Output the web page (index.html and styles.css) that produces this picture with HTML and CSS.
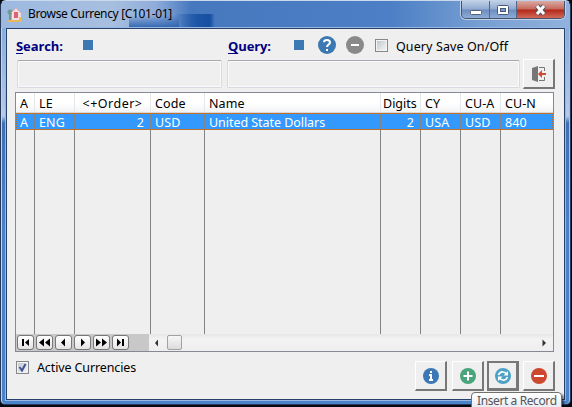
FILE: index.html
```html
<!DOCTYPE html>
<html lang="en">
<head>
<meta charset="utf-8">
<title>Browse Currency</title>
<link rel="stylesheet" href="styles.css">
</head>
<body>
<div class="window">
  <header class="titlebar">
    <svg class="app-icon" width="16" height="16" viewBox="0 0 16 16">
      <rect x="1" y="13" width="14" height="2" fill="#e8b765"/>
      <circle cx="3" cy="5" r="2.5" fill="#6d9d91"/><path d="M3 6v7" stroke="#78958a" stroke-width="2"/>
      <path d="M4 6 9 1l5 5v7H5V6z" fill="#f3dfdf"/><path d="M4 6 9 1l5 5" fill="none" stroke="#e6a7a8"/>
      <rect x="7" y="5" width="4" height="6" fill="#dd6379"/><rect x="12" y="10" width="2" height="3" fill="#e7c44e"/>
    </svg>
    <span class="title">Browse Currency [C101-01]</span>
    <div class="controls">
      <span class="ctl min"><svg width="28" height="18"><rect x="8.500" y="9.500" width="11" height="4" rx="1" fill="#fff" stroke="#52617d"/></svg></span>
      <span class="ctl max"><svg width="26" height="18"><rect x="7.500" y="4.500" width="11" height="9" rx="1" fill="#fff" stroke="#46577a"/><rect x="10.500" y="7.500" width="5" height="3" fill="#819bc9" stroke="#46577a"/></svg></span>
      <span class="ctl close"><svg width="47" height="18"><path d="m20 5 7 8m0-8-7 8" stroke="#515366" stroke-width="5"/><path d="m20 5 7 8m0-8-7 8" stroke="#fff" stroke-width="3"/></svg></span>
    </div>
  </header>
  <main class="client">
    <div class="filters">
      <b class="label search-label"><u>S</u>earch:</b><i class="square"></i>
      <b class="label query-label"><u>Q</u>uery:</b><i class="square"></i>
      <svg class="help" width="18" height="18"><circle cx="9" cy="9" r="9" fill="#3c78b2"/><path d="M6 6.300Q6 4 9 4t3 2.500C12 8.500 9 8.500 9 11" fill="none" stroke="#fff" stroke-width="2"/><rect x="8" y="13" width="2" height="2" fill="#fff"/></svg>
      <svg class="clear" width="18" height="18"><circle cx="9" cy="9" r="9" fill="#898989"/><rect x="5" y="8" width="8" height="2" fill="#fff"/></svg>
      <span class="check"></span><span class="query-save">Query Save On/Off</span>
    </div>
    <div class="fields">
      <div class="field search-field"></div><div class="field query-field"></div>
      <div class="button"><svg width="16" height="18"><path d="m1 3 6-2v16l-6-2z" fill="#777"/><path d="M8 2.500h5.500V6M8 15.500h5.500V12" fill="none" stroke="#777"/><path d="M15 9H9" stroke="#d04a32" stroke-width="2"/><path d="m7 9 4-4v8z" fill="#d04a32"/></svg></div>
    </div>
    <div class="browse">
      <div class="row head"><span>A</span><span>LE</span><span class="order">&lt;+Order&gt;</span><span>Code</span><span>Name</span><span class="digits">Digits</span><span>CY</span><span>CU-A</span><span>CU-N</span></div>
      <div class="row selected"><span>A</span><span>ENG</span><span class="num">2</span><span>USD</span><span class="name">United State Dollars</span><span class="num">2</span><span>USA</span><span>USD</span><span>840</span></div>
      <div class="row empty"><span></span><span></span><span></span><span></span><span></span><span></span><span></span><span></span><span></span></div>
      <div class="footer">
        <div class="nav">
          <span><svg width="15" height="13"><path d="M4 3h2v7H4zM7 6.500 11 3v7z"/></svg></span>
          <span><svg width="15" height="13"><path d="m2 6.500 5-4v8zM8 6.500 13 2.500v8z"/></svg></span>
          <span><svg width="15" height="13"><path d="m5 6.500 4-4v8z"/></svg></span>
          <span><svg width="15" height="13"><path d="M10 6.500 6 2.500v8z"/></svg></span>
          <span><svg width="15" height="13"><path d="M7 6.500 2 2.500v8zM13 6.500 8 2.500v8z"/></svg></span>
          <span><svg width="15" height="13"><path d="M8 6.500 4 2.500v8zM9 3h2v7H9z"/></svg></span>
        </div>
        <div class="scroll"><svg width="6" height="8"><path d="m1 4 3-3.500v7z" fill="#333"/></svg><span class="thumb"></span><svg class="right" width="6" height="8"><path d="M5 4 1.500.5v7z" fill="#333"/></svg></div>
      </div>
    </div>
    <div class="actions">
      <span class="check active-check"><svg width="11" height="11"><path d="m2.500 5 2.500 3.500L8.500 2" fill="none" stroke="#3f5594" stroke-width="2"/></svg></span><span class="active">Active Currencies</span>
      <div class="buttons">
        <div class="button info"><svg width="16" height="16"><circle cx="8" cy="8" r="8" fill="#3c78b5"/><path d="M7 3h2v2H7zM6 6h3v5h1v2H6v-2h1V8H6z" fill="#fff"/></svg></div>
        <div class="button"><svg width="16" height="16"><circle cx="8" cy="8" r="8" fill="#4ba47c"/><path d="M8 3.500v9M3.500 8h9" stroke="#fff" stroke-width="2"/></svg></div>
        <div class="button focused"><svg width="16" height="16"><circle cx="8" cy="8" r="8" fill="#4ca1c5"/><path d="M3.500 7Q5 3.500 8 4q2 0 3.500 2M12.500 9Q11 12.500 8 12q-2 0-3.500-2" fill="none" stroke="#fff" stroke-width="1.700"/><path d="M13 3v4.500H8.500zM3 13V8.500h4.500z" fill="#fff"/></svg></div>
        <div class="button"><svg width="16" height="16"><circle cx="8" cy="8" r="8" fill="#cc492f"/><path d="M3 8h10" stroke="#fff" stroke-width="2"/></svg></div>
      </div>
    </div>
  </main>
</div>
<div class="tooltip"><span>Insert a Record</span></div>
</body>
</html>
```
FILE: styles.css
```css
* { box-sizing: border-box; }
body {
  margin: 0;
  width: 572px;
  height: 407px;
  overflow: hidden;
  position: relative;
  background: #050914;
  font: 12px/16px "Noto Sans", sans-serif;
  color: #000;
}
svg { display: block; flex: none; }
.window {
  width: 571px;
  height: 405px;
  padding: 0 5px 5px;
  border: 1px solid #293a58;
  border-top-color: #cad9ec;
  border-radius: 6px 6px 5px 5px;
  background: linear-gradient(#a7c0e3, #87addc 28px, #b5cbea 115px, #3e70b3 122px, #4a82ca 230px, #4b83ca);
  box-shadow: inset 1px 0 #bed4f0, inset -1px 0 #9ec3ed;
}
.titlebar {
  height: 27px;
  margin: 0 -5px;
  padding: 0 0 0 5px;
  display: flex;
  border-radius: 5px 5px 0 0;
  background:
    linear-gradient(90deg, #4678be00, #1d56a6 22px, #1750a0 35px, #4678be00) 174px 13px / 40px 14px no-repeat,
    linear-gradient(#4678be00, #2f65b1) 128px 14px / 50px 13px no-repeat,
    linear-gradient(90deg, #9db9e0, #a7bfdf 110px, #8facda 155px, #4678be 190px, #4c7fc5 390px, #779fd2 480px, #91b2dd);
}
.app-icon { margin: 6px 5px 0 1px; }
.title { margin-top: 5px; width: 145px; white-space: nowrap; letter-spacing: -.33px; }
.controls {
  display: flex;
  width: 104px;
  height: 18px;
  margin-left: auto;
  margin-right: 5px;
  border: 1px solid #46536d;
  border-top: 0;
  border-radius: 0 0 5px 5px;
  box-shadow: 0 0 0 1px #c0d2eb;
  overflow: hidden;
}
.ctl { height: 18px; flex: none; border-right: 1px solid #53678b; background: linear-gradient(#c0cfe5, #91a9d0 8px, #6d8dbf 9px, #91b1da); }
.min { width: 28px; }
.max { width: 27px; }
.close { width: 47px; border: 0; background: linear-gradient(#d9aba4, #c66a5c 8px, #b3281b 9px, #d57260); }
.client {
  height: 372px;
  border: 1px solid #27406c;
  box-shadow: 0 0 0 1px #98b8e1;
  background: #efefef;
  padding: 7px 9px 0 9px;
}
.filters { height: 23px; display: flex; align-items: flex-start; }
.label { color: #000080; font: bold 13px/20px "Open Sans", sans-serif; white-space: nowrap; letter-spacing: -.1px; }
.search-label { width: 67px; }
.query-label { width: 66px; margin-left: 135px; }
.label u { text-underline-offset: 2px; }
.square { width: 10px; height: 10px; background: #3c78b2; margin-top: 4px; flex: none; }
.help { margin-left: 14px; }
.clear { margin-left: 10px; }
.check { width: 13px; height: 13px; flex: none; border: 1px solid #858789; background: linear-gradient(135deg, #bec3c8, #f8f8f8); box-shadow: inset 0 0 0 1px #f4f4f4; margin: 3px 0 0 11px; }
.query-save { margin: 3px 0 0 8px; white-space: nowrap; font-size: 12.500px; letter-spacing: .1px; }
.fields { display: flex; margin: 0 0 3px; height: 30px; }
.field { margin-top: 1px; height: 28px; border: 1px solid #d7dbe1; border-top-color: #a5a8ae; border-radius: 2px; box-shadow: inset 0 0 0 1px #fafafa; }
.search-field { width: 205px; margin-left: 1px; }
.query-field { width: 293px; margin: 1px 3px 0 5px; }
.button { width: 32px; height: 30px; border: 1px solid #fff; border-right: 2px solid #777; border-bottom: 2px solid #777; display: grid; place-items: center; flex: none; background: #efefef; }
.browse { width: 539px; height: 260px; border: 1px solid #858993; overflow: hidden; margin-left: -1px; }
.row { display: grid; grid-template-columns: 19px 40px 76px 54px 176px 40px 40px 40px 52px; font-size: 12.500px; line-height: 17px; }
.row span { padding: 0 4px 0 4px; border-right: 1px solid #838383; white-space: nowrap; overflow: hidden; letter-spacing: .1px; }
.row span:last-child { border-right: 0; }
.head { height: 20px; background: linear-gradient(#fff 10px, #f2f3f5); border-bottom: 1px solid #d6d8dc; font-size: 12.500px; line-height: 21px; }
.head span { border-color: #e3e6ea; }
.head .order { text-align: center; letter-spacing: .5px; padding: 0; }
.head .digits { padding: 0 0 0 2px; letter-spacing: 0; }
.selected { height: 17px; line-height: 19px; color: #fff; background: #3399ff; outline: 1px dotted #c06c25; outline-offset: -1px; }
.selected span { height: 17px; }
.selected .num { text-align: right; padding-right: 6px; }
.selected .name { letter-spacing: -.05px; }
.empty { height: 204px; }
.footer { display: flex; height: 17px; }
.nav { width: 133px; background: #c8c8c8; display: flex; gap: 2px; padding: 1px 0 0 1px; }
.nav span { width: 17px; height: 15px; border: 1px solid #777; border-radius: 3px; background: linear-gradient(#fff, #e4e4e4); flex: none; }
.scroll { flex: 1; display: flex; align-items: center; padding: 0 6px 0 5px; background: linear-gradient(#e6e6e6, #f3f3f3 5px, #eee); }
.thumb { width: 15px; height: 15px; border: 1px solid #a2a2a2; border-radius: 2px; background: linear-gradient(#f7f7f7, #dcdcdc); margin-left: 7px; }
.right { margin-left: auto; }
.actions { display: flex; height: 38px; padding-top: 9px; }
.active-check { margin: 0; }
.active { margin: -1px 0 0 8px; font-size: 12.500px; white-space: nowrap; letter-spacing: -.12px; }
.buttons { display: flex; margin-left: auto; gap: 4px; }
.buttons .info { margin-right: 1px; }
.buttons .focused { border: 2px solid #777; border-right-width: 3px; border-bottom-width: 3px; margin-left: -1px; }
.tooltip { position: absolute; left: 471px; top: 392px; width: 91px; height: 20px; padding-left: 5px; border: 1px solid #707070; border-radius: 4px; background: linear-gradient(#fff, #e5e7f0); box-shadow: 2px 2px 2px #0008; color: #555; line-height: 16px; white-space: nowrap; letter-spacing: -.4px; }
```
